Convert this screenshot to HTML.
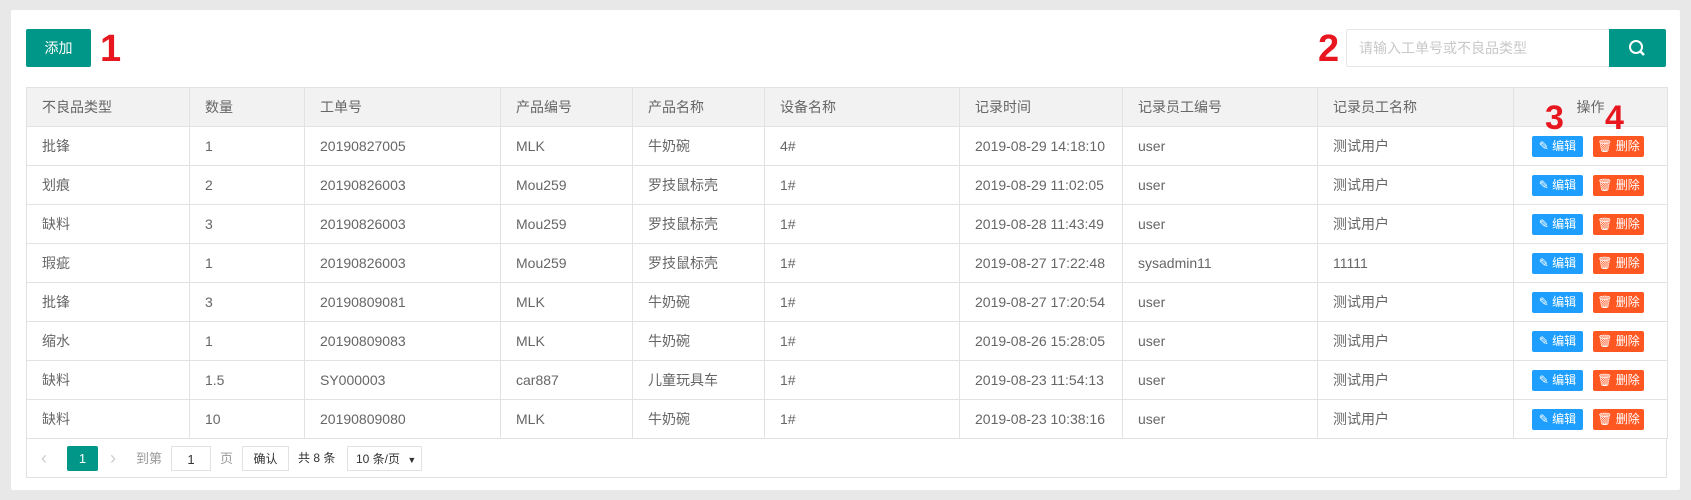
<!DOCTYPE html>
<html><head><meta charset="utf-8"><style>
*{box-sizing:border-box;margin:0;padding:0}
body{width:1691px;height:500px;background:#e8e8e8;font-family:"Liberation Sans","Noto Sans CJK SC",sans-serif;font-size:14px;color:#666;position:relative;overflow:hidden}
.panel{position:absolute;left:11px;top:10px;width:1669px;height:480px;background:#fff;border-radius:2px}
.abs{position:absolute}
.add{left:26px;top:29px;width:65px;height:38px;background:#009688;color:#fff;border-radius:2px;text-align:center;line-height:38px;font-size:14px}
.red{color:#e8161e;font-weight:bold;font-size:38px;line-height:38px;z-index:5}
.inp{left:1346px;top:29px;width:264px;height:38px;border:1px solid #e6e6e6;border-right:none;color:#c8c8c8;line-height:36px;padding-left:12px;border-radius:2px 0 0 2px}
.sbtn{left:1609px;top:29px;width:57px;height:38px;background:#009688;border-radius:0 2px 2px 0}
table{position:absolute;left:26px;top:87px;border-collapse:collapse;table-layout:fixed;width:1641px}
td,th{border:1px solid #e2e2e2;height:39px;padding-left:15px;text-align:left;font-weight:normal;white-space:nowrap;color:#666}
th{background:#f2f2f2}
.be,.bd{display:inline-block;height:21px;line-height:21px;color:#fff;font-size:12px;border-radius:2px;width:51px;text-align:center;vertical-align:middle}
.be{background:#1e9fff;margin-left:3px}
.bd{background:#ff5722;margin-left:10px}
.pg{left:26px;top:438px;width:1641px;height:40px;border:1px solid #e2e2e2;border-top:none}
.pgi{position:absolute;top:8px;height:25px;line-height:25px;font-size:13px}
</style></head><body>
<div class="panel"></div>
<div class="abs add">添加</div>
<div class="abs inp">请输入工单号或不良品类型</div>
<div class="abs sbtn"><svg width="57" height="38"><circle cx="27" cy="18" r="6" fill="none" stroke="#fff" stroke-width="2"/><line x1="31.5" y1="22.5" x2="35" y2="26" stroke="#fff" stroke-width="2.5"/></svg></div>
<table>
<colgroup><col style="width:163px"><col style="width:115px"><col style="width:196px"><col style="width:132px"><col style="width:132px"><col style="width:195px"><col style="width:163px"><col style="width:195px"><col style="width:196px"><col style="width:154px"></colgroup>
<tr><th>不良品类型</th><th>数量</th><th>工单号</th><th>产品编号</th><th>产品名称</th><th>设备名称</th><th>记录时间</th><th>记录员工编号</th><th>记录员工名称</th><th style="text-align:center;padding-left:0">操作</th></tr>
<tr><td>批锋</td><td>1</td><td>20190827005</td><td>MLK</td><td>牛奶碗</td><td>4#</td><td>2019-08-29 14:18:10</td><td>user</td><td>测试用户</td><td><span class="be">✎ 编辑</span><span class="bd">🗑 删除</span></td></tr>
<tr><td>划痕</td><td>2</td><td>20190826003</td><td>Mou259</td><td>罗技鼠标壳</td><td>1#</td><td>2019-08-29 11:02:05</td><td>user</td><td>测试用户</td><td><span class="be">✎ 编辑</span><span class="bd">🗑 删除</span></td></tr>
<tr><td>缺料</td><td>3</td><td>20190826003</td><td>Mou259</td><td>罗技鼠标壳</td><td>1#</td><td>2019-08-28 11:43:49</td><td>user</td><td>测试用户</td><td><span class="be">✎ 编辑</span><span class="bd">🗑 删除</span></td></tr>
<tr><td>瑕疵</td><td>1</td><td>20190826003</td><td>Mou259</td><td>罗技鼠标壳</td><td>1#</td><td>2019-08-27 17:22:48</td><td>sysadmin11</td><td>11111</td><td><span class="be">✎ 编辑</span><span class="bd">🗑 删除</span></td></tr>
<tr><td>批锋</td><td>3</td><td>20190809081</td><td>MLK</td><td>牛奶碗</td><td>1#</td><td>2019-08-27 17:20:54</td><td>user</td><td>测试用户</td><td><span class="be">✎ 编辑</span><span class="bd">🗑 删除</span></td></tr>
<tr><td>缩水</td><td>1</td><td>20190809083</td><td>MLK</td><td>牛奶碗</td><td>1#</td><td>2019-08-26 15:28:05</td><td>user</td><td>测试用户</td><td><span class="be">✎ 编辑</span><span class="bd">🗑 删除</span></td></tr>
<tr><td>缺料</td><td>1.5</td><td>SY000003</td><td>car887</td><td>儿童玩具车</td><td>1#</td><td>2019-08-23 11:54:13</td><td>user</td><td>测试用户</td><td><span class="be">✎ 编辑</span><span class="bd">🗑 删除</span></td></tr>
<tr><td>缺料</td><td>10</td><td>20190809080</td><td>MLK</td><td>牛奶碗</td><td>1#</td><td>2019-08-23 10:38:16</td><td>user</td><td>测试用户</td><td><span class="be">✎ 编辑</span><span class="bd">🗑 删除</span></td></tr>
</table>
<div class="abs red" style="left:100px;top:30px">1</div>
<div class="abs red" style="left:1318px;top:30px">2</div>
<div class="abs red" style="left:1545px;top:99px;font-size:34px">3</div>
<div class="abs red" style="left:1605px;top:99px;font-size:34px">4</div>
<div class="abs pg">
<div class="pgi" style="left:14px;color:#ccc;font-size:18px">‹</div>
<div class="pgi" style="left:40px;width:31px;background:#009688;color:#fff;text-align:center;border-radius:2px">1</div>
<div class="pgi" style="left:83px;color:#ccc;font-size:18px">›</div>
<div class="pgi" style="left:109px;color:#999">到第</div>
<div class="pgi" style="left:144px;width:40px;border:1px solid #e2e2e2;text-align:center;color:#333">1</div>
<div class="pgi" style="left:193px;color:#999">页</div>
<div class="pgi" style="left:215px;width:47px;border:1px solid #e2e2e2;text-align:center;color:#333;font-size:12px">确认</div>
<div class="pgi" style="left:271px;color:#333;font-size:12px">共 8 条</div>
<div class="pgi" style="left:320px;width:75px;border:1px solid #e2e2e2;padding-left:8px;color:#333;font-size:12px">10 条/页 <span style="font-size:9px;margin-left:4px">▼</span></div>
</div>
</body></html>
